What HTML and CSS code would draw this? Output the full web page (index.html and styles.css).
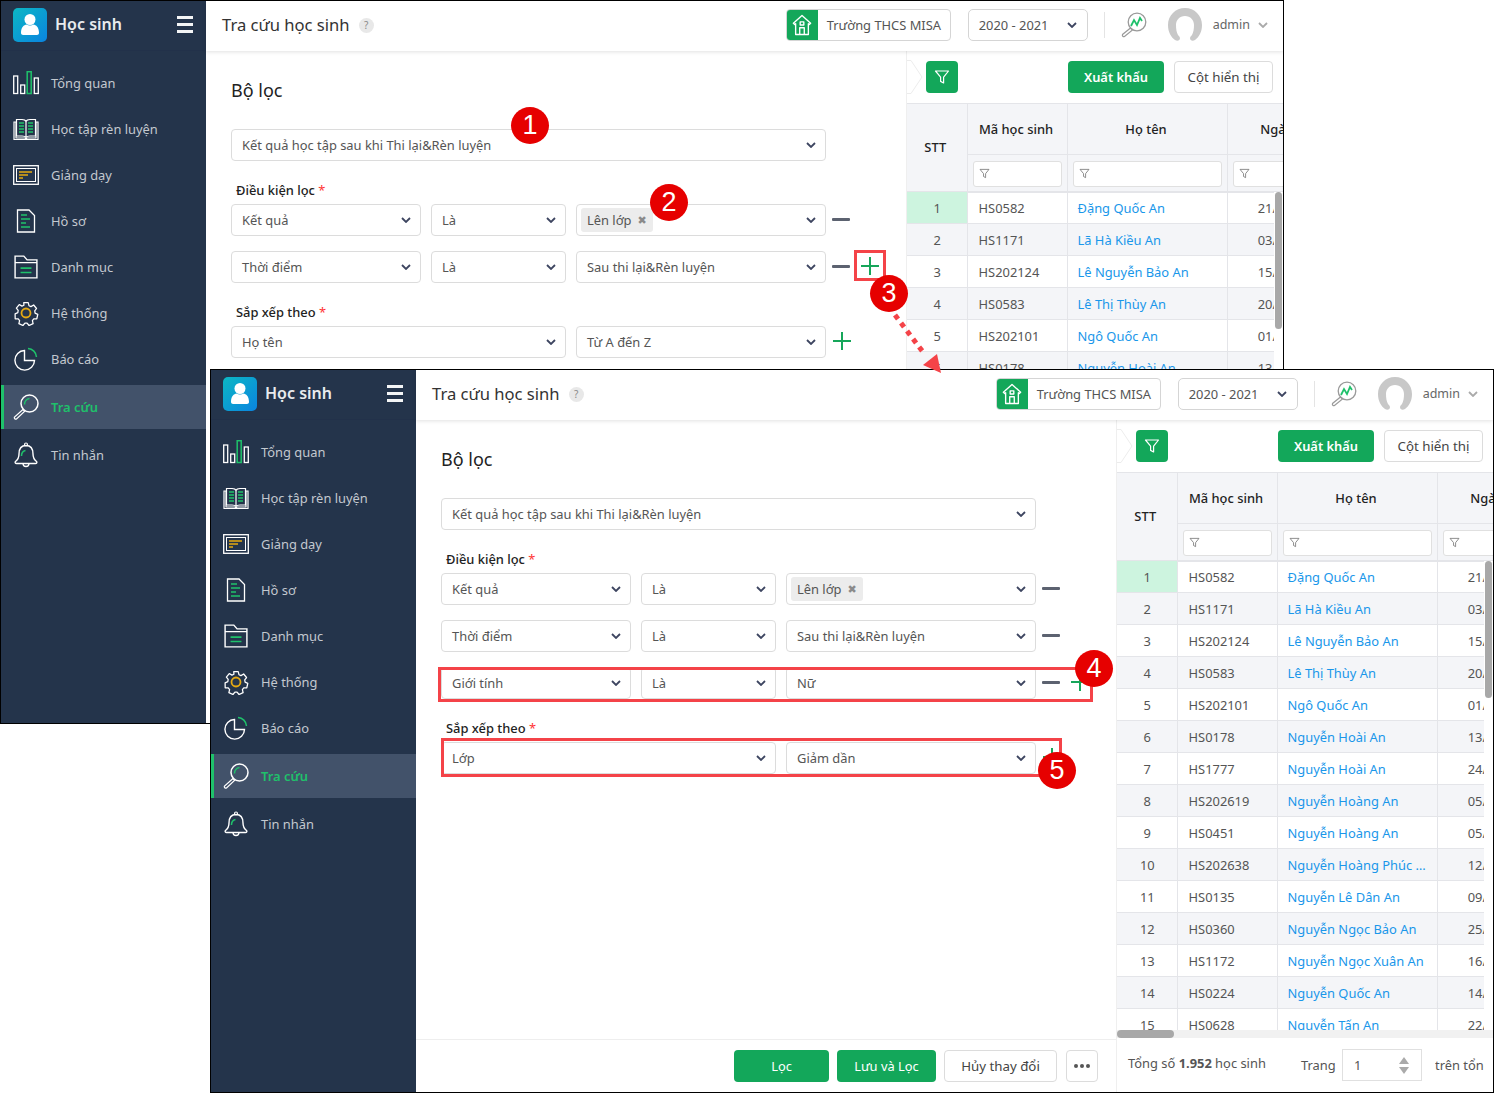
FILE: index.html
```html
<!DOCTYPE html>
<html lang="vi">
<head>
<meta charset="utf-8">
<title>Tra cứu học sinh</title>
<link rel="stylesheet" href="styles.css">
</head>
<body>
<svg class="defs" xmlns="http://www.w3.org/2000/svg">
  <symbol id="i-chev" viewBox="0 0 10 6"><path d="M1 1l4 4 4-4" fill="none" stroke="currentColor" stroke-width="1.8"/></symbol>
  <symbol id="i-funnel" viewBox="0 0 16 16"><path d="M1.500 2h13L9.600 8.200V14l-3-1.600V8.200z" fill="none" stroke="currentColor" stroke-width="1.200" stroke-linejoin="round"/></symbol>
  <symbol id="i-user" viewBox="0 0 34 34"><circle cx="17" cy="11.500" r="5.500" fill="#fff"/><path d="M8 25c0-6 3-8 5.500-8.500 2 1.400 5 1.400 7 0C23 17 26 19 26 25c0 1-1 2-2 2H10c-1 0-2-1-2-2z" fill="#fff"/></symbol>
  <symbol id="i-bars" viewBox="0 0 26 24"><g fill="none" stroke="#fff" stroke-width="1.300"><rect x=".7" y="5" width="4" height="17.500"/><rect x="7.700" y="14" width="4" height="8.500"/><rect x="21.300" y="7" width="4" height="15.500"/></g><rect x="14.200" y=".7" width="4" height="21.800" fill="none" stroke="#1fc16b" stroke-width="1.500"/></symbol>
  <symbol id="i-book" viewBox="0 0 26 24"><g fill="none" stroke="#fff" stroke-width="1.200"><path d="M1 5h2v16h9l1 1 1-1h9V5h2v17.500H1z"/><path d="M3.500 2.500H9c2 0 3.500.7 4 2 .5-1.300 2-2 4-2h5.500V19H17c-2 0-3.500.5-4 1.500-.5-1-2-1.500-4-1.500H3.500zM13 4.500v16"/></g><path d="M6 6h5M6 9h5M6 12h5M6 15h5M15 6h5M15 9h5M15 12h5M15 15h5" stroke="#1fc16b" stroke-width="1.600"/></symbol>
  <symbol id="i-board" viewBox="0 0 26 20"><rect x=".7" y=".7" width="24.600" height="18.600" fill="none" stroke="#fff" stroke-width="1.300"/><rect x="3.500" y="3.500" width="19" height="13" fill="none" stroke="#fff" stroke-width="1"/><path d="M6 7h13M6 10h9M6 13h4" stroke="#e5a912" stroke-width="1.700"/></symbol>
  <symbol id="i-doc" viewBox="0 0 20 24"><path d="M1.500 1H13l5.500 5.500V23h-17z" fill="none" stroke="#fff" stroke-width="1.300"/><path d="M5 6h6M5 10h9M5 14h5M5 18h9" stroke="#1fc16b" stroke-width="1.500"/></symbol>
  <symbol id="i-folder" viewBox="0 0 22 22"><path d="M1 1h8l3 3.500h9V21H1zM1 7h20" fill="none" stroke="#fff" stroke-width="1.300"/><path d="M6 12h10M6 16h10" stroke="#1fc16b" stroke-width="1.500"/></symbol>
  <symbol id="i-gear" viewBox="0 0 26 26"><path d="M10.500 1.500h5l.8 3.400 2.200 1 3-1.800 3.200 3.900-2 2.700.4 2.400 3 1.400-1.100 4.900-3.400.1-1.500 1.900.8 3.400-4.500 2.100-2.200-2.700h-2.400l-2.200 2.700-4.500-2.100.8-3.400-1.500-1.900-3.400-.1L.9 14l3-1.400.4-2.400-2-2.700L5.500 3.600l3 1.800 2.200-1z" transform="translate(1.300 1.300) scale(.9)" fill="none" stroke="#fff" stroke-width="1.400" stroke-linejoin="round"/><circle cx="13" cy="13" r="4.500" fill="none" stroke="#e5a912" stroke-width="1.800"/></symbol>
  <symbol id="i-pie" viewBox="0 0 24 24"><path d="M10.500 3.500a9.800 9.800 0 1 0 10 10h-10z" fill="none" stroke="#fff" stroke-width="1.400"/><path d="M14 1.500a9 9 0 0 1 8.500 8.500" fill="none" stroke="#1fc16b" stroke-width="1.500"/></symbol>
  <symbol id="i-search" viewBox="0 0 26 26"><circle cx="16.500" cy="9.500" r="8.500" fill="none" stroke="#fff" stroke-width="1.500"/><path d="M11.500 10.500a6 6 0 0 1 5-6" fill="none" stroke="#1fc16b" stroke-width="1.500"/><path d="M10 15.500L1.500 23a1.500 1.500 0 0 0 2 2L11.500 17.500z" fill="none" stroke="#fff" stroke-width="1.200"/></symbol>
  <symbol id="i-bell" viewBox="0 0 24 26"><path d="M12 3.500c-5 0-7 3.500-7 8.500 0 4-1.500 6-3.500 7.500-1 1 0 2 1 2h19c1 0 2-1 1-2-2-1.500-3.500-3.500-3.500-7.500 0-5-2-8.500-7-8.500z" fill="none" stroke="#fff" stroke-width="1.400"/><circle cx="12" cy="2.500" r="1.500" fill="none" stroke="#fff" stroke-width="1.100"/><path d="M9 21.500a3 3 0 0 0 6 0" fill="none" stroke="#fff" stroke-width="1.300"/><path d="M7.500 14c0-3 1.500-5 4-5.500" fill="none" stroke="#1fc16b" stroke-width="1.500"/></symbol>
  <symbol id="i-home" viewBox="0 0 22 24"><path d="M11 1.500L1.500 10l1.500 1.500 1-.9V22.500h14V10.600l1 .9L20.500 10zM8.500 22.500V15h5v7.500M9 8.500h4v3.500H9z" fill="none" stroke="#fff" stroke-width="1.500" stroke-linejoin="round"/></symbol>
  <symbol id="i-trend" viewBox="0 0 28 26"><circle cx="17" cy="10" r="8.800" fill="none" stroke="#9a9a9a" stroke-width="1.300"/><path d="M11 14l3-6 3 5 3-7 2 3" fill="none" stroke="#1fc16b" stroke-width="1.800"/><path d="M10.500 16L2.500 22.500a1.500 1.500 0 0 0 2 2L12.500 18z" fill="none" stroke="#9a9a9a" stroke-width="1.200"/></symbol>
  <symbol id="i-avatar" viewBox="0 0 34 34"><path d="M17 0c9.500 0 17 7.500 17 17 0 7-3 12-7 15-2.500 1.500-5 .5-5-2 .5-1.500 1-2 2-3 1.500-3 2-6 2-10 0-5-3.500-9-9-9s-9 4-9 9c0 4 .5 7 2 10 1 1 1.500 1.500 2 3 0 2.500-2.500 3.500-5 2-4-3-7-8-7-15C0 7.500 7.500 0 17 0z" fill="#c8c8c8"/></symbol>
  <symbol id="i-tab" viewBox="0 0 16 34"><path d="M0 .5h4L15 17 4 33.500H0" fill="#fff" stroke="#ececec" stroke-width="1"/></symbol>
</svg>

<section class="win win-a">
  <aside class="side">
    <div class="brand">
      <span class="brand-logo"><svg class="brand-user"><use href="#i-user"/></svg></span>
      <span class="brand-name">Học sinh</span>
      <span class="burger"><i></i><i></i><i></i></span>
    </div>
    <nav class="nav">
      <a class="nav-item"><svg class="nav-ico nav-ico-tall"><use href="#i-bars"/></svg>Tổng quan</a>
      <a class="nav-item"><svg class="nav-ico nav-ico-tall"><use href="#i-book"/></svg>Học tập rèn luyện</a>
      <a class="nav-item"><svg class="nav-ico"><use href="#i-board"/></svg>Giảng dạy</a>
      <a class="nav-item"><svg class="nav-ico nav-ico-tall"><use href="#i-doc"/></svg>Hồ sơ</a>
      <a class="nav-item"><svg class="nav-ico nav-ico-tall"><use href="#i-folder"/></svg>Danh mục</a>
      <a class="nav-item"><svg class="nav-ico nav-ico-lg"><use href="#i-gear"/></svg>Hệ thống</a>
      <a class="nav-item"><svg class="nav-ico nav-ico-tall"><use href="#i-pie"/></svg>Báo cáo</a>
      <a class="nav-item nav-active"><svg class="nav-ico nav-ico-lg"><use href="#i-search"/></svg>Tra cứu</a>
      <a class="nav-item"><svg class="nav-ico nav-ico-lg"><use href="#i-bell"/></svg>Tin nhắn</a>
    </nav>
  </aside>
  <div class="main">
    <header class="top">
      <h1 class="page-title">Tra cứu học sinh</h1><span class="help">?</span>
      <span class="spacer"></span>
      <div class="school"><span class="school-ico"><svg class="home"><use href="#i-home"/></svg></span><span class="school-name">Trường THCS MISA</span></div>
      <div class="year">2020 - 2021<svg class="chev"><use href="#i-chev"/></svg></div>
      <span class="sep"></span>
      <svg class="trend"><use href="#i-trend"/></svg>
      <svg class="avatar"><use href="#i-avatar"/></svg>
      <span class="admin">admin</span><svg class="chev chev-admin"><use href="#i-chev"/></svg>
    </header>
    <div class="content">
      <div class="filter">
        <div class="filter-body">
          <h2 class="filter-title">Bộ lọc</h2>
          <div class="row"><div class="sel w-full">Kết quả học tập sau khi Thi lại&amp;Rèn luyện<svg class="chev"><use href="#i-chev"/></svg></div></div>
          <div class="label">Điều kiện lọc <b>*</b></div>
          <div class="row row-gap">
            <div class="sel w-a">Kết quả<svg class="chev"><use href="#i-chev"/></svg></div>
            <div class="sel w-b">Là<svg class="chev"><use href="#i-chev"/></svg></div>
            <div class="sel w-c sel-chip"><span class="chip">Lên lớp<i class="chip-x">✖</i></span><svg class="chev"><use href="#i-chev"/></svg></div>
            <span class="minus"></span>
          </div>
          <div class="row row-gap">
            <div class="sel w-a">Thời điểm<svg class="chev"><use href="#i-chev"/></svg></div>
            <div class="sel w-b">Là<svg class="chev"><use href="#i-chev"/></svg></div>
            <div class="sel w-c">Sau thi lại&amp;Rèn luyện<svg class="chev"><use href="#i-chev"/></svg></div>
            <span class="minus"></span><span class="plus"></span>
          </div>
          <div class="label">Sắp xếp theo <b>*</b></div>
          <div class="row">
            <div class="sel w-ab">Họ tên<svg class="chev"><use href="#i-chev"/></svg></div>
            <div class="sel w-c">Từ A đến Z<svg class="chev"><use href="#i-chev"/></svg></div>
            <span class="plus plus-first"></span>
          </div>
        </div>
      </div>
      <div class="data">
        <div class="toolbar">
          <svg class="tab"><use href="#i-tab"/></svg>
          <button class="btn btn-icon"><svg class="funnel-w"><use href="#i-funnel"/></svg></button>
          <span class="spacer"></span>
          <button class="btn btn-green btn-export">Xuất khẩu</button>
          <button class="btn btn-light btn-cols">Cột hiển thị</button>
        </div>
        <div class="tbl-wrap">
          <table class="tbl">
            <colgroup><col class="c1"><col class="c2"><col class="c3"><col class="c4"></colgroup>
            <thead>
              <tr class="h1"><th rowspan="2" class="th-stt">STT</th><th>Mã học sinh</th><th>Họ tên</th><th>Ngày sinh</th></tr>
              <tr class="h2"><th><span class="fi"><svg class="funnel"><use href="#i-funnel"/></svg></span></th><th><span class="fi"><svg class="funnel"><use href="#i-funnel"/></svg></span></th><th><span class="fi"><svg class="funnel"><use href="#i-funnel"/></svg></span></th></tr>
            </thead>
            <tbody>
              <tr><td class="num cur">1</td><td class="code">HS0582</td><td class="lnk">Đặng Quốc An</td><td class="date">21/05/2006</td></tr>
              <tr><td class="num">2</td><td class="code">HS1171</td><td class="lnk">Lã Hà Kiều An</td><td class="date">03/02/2006</td></tr>
              <tr><td class="num">3</td><td class="code">HS202124</td><td class="lnk">Lê Nguyễn Bảo An</td><td class="date">15/09/2006</td></tr>
              <tr><td class="num">4</td><td class="code">HS0583</td><td class="lnk">Lê Thị Thùy An</td><td class="date">20/11/2006</td></tr>
              <tr><td class="num">5</td><td class="code">HS202101</td><td class="lnk">Ngô Quốc An</td><td class="date">01/03/2006</td></tr>
              <tr><td class="num">6</td><td class="code">HS0178</td><td class="lnk">Nguyễn Hoài An</td><td class="date">13/07/2006</td></tr>
            </tbody>
          </table>
          <div class="vtrack"><span class="vthumb"></span></div>
        </div>
      </div>
    </div>
  </div>
</section>

<section class="win win-b">
  <aside class="side">
    <div class="brand">
      <span class="brand-logo"><svg class="brand-user"><use href="#i-user"/></svg></span>
      <span class="brand-name">Học sinh</span>
      <span class="burger"><i></i><i></i><i></i></span>
    </div>
    <nav class="nav">
      <a class="nav-item"><svg class="nav-ico nav-ico-tall"><use href="#i-bars"/></svg>Tổng quan</a>
      <a class="nav-item"><svg class="nav-ico nav-ico-tall"><use href="#i-book"/></svg>Học tập rèn luyện</a>
      <a class="nav-item"><svg class="nav-ico"><use href="#i-board"/></svg>Giảng dạy</a>
      <a class="nav-item"><svg class="nav-ico nav-ico-tall"><use href="#i-doc"/></svg>Hồ sơ</a>
      <a class="nav-item"><svg class="nav-ico nav-ico-tall"><use href="#i-folder"/></svg>Danh mục</a>
      <a class="nav-item"><svg class="nav-ico nav-ico-lg"><use href="#i-gear"/></svg>Hệ thống</a>
      <a class="nav-item"><svg class="nav-ico nav-ico-tall"><use href="#i-pie"/></svg>Báo cáo</a>
      <a class="nav-item nav-active"><svg class="nav-ico nav-ico-lg"><use href="#i-search"/></svg>Tra cứu</a>
      <a class="nav-item"><svg class="nav-ico nav-ico-lg"><use href="#i-bell"/></svg>Tin nhắn</a>
    </nav>
  </aside>
  <div class="main">
    <header class="top">
      <h1 class="page-title">Tra cứu học sinh</h1><span class="help">?</span>
      <span class="spacer"></span>
      <div class="school"><span class="school-ico"><svg class="home"><use href="#i-home"/></svg></span><span class="school-name">Trường THCS MISA</span></div>
      <div class="year">2020 - 2021<svg class="chev"><use href="#i-chev"/></svg></div>
      <span class="sep"></span>
      <svg class="trend"><use href="#i-trend"/></svg>
      <svg class="avatar"><use href="#i-avatar"/></svg>
      <span class="admin">admin</span><svg class="chev chev-admin"><use href="#i-chev"/></svg>
    </header>
    <div class="content">
      <div class="filter">
        <div class="filter-body">
          <h2 class="filter-title">Bộ lọc</h2>
          <div class="row"><div class="sel w-full">Kết quả học tập sau khi Thi lại&amp;Rèn luyện<svg class="chev"><use href="#i-chev"/></svg></div></div>
          <div class="label">Điều kiện lọc <b>*</b></div>
          <div class="row row-gap">
            <div class="sel w-a">Kết quả<svg class="chev"><use href="#i-chev"/></svg></div>
            <div class="sel w-b">Là<svg class="chev"><use href="#i-chev"/></svg></div>
            <div class="sel w-c sel-chip"><span class="chip">Lên lớp<i class="chip-x">✖</i></span><svg class="chev"><use href="#i-chev"/></svg></div>
            <span class="minus"></span>
          </div>
          <div class="row row-gap">
            <div class="sel w-a">Thời điểm<svg class="chev"><use href="#i-chev"/></svg></div>
            <div class="sel w-b">Là<svg class="chev"><use href="#i-chev"/></svg></div>
            <div class="sel w-c">Sau thi lại&amp;Rèn luyện<svg class="chev"><use href="#i-chev"/></svg></div>
            <span class="minus"></span>
          </div>
          <div class="row row-gap">
            <div class="sel w-a">Giới tính<svg class="chev"><use href="#i-chev"/></svg></div>
            <div class="sel w-b">Là<svg class="chev"><use href="#i-chev"/></svg></div>
            <div class="sel w-c">Nữ<svg class="chev"><use href="#i-chev"/></svg></div>
            <span class="minus"></span><span class="plus"></span>
          </div>
          <div class="label">Sắp xếp theo <b>*</b></div>
          <div class="row">
            <div class="sel w-ab">Lớp<svg class="chev"><use href="#i-chev"/></svg></div>
            <div class="sel w-c">Giảm dần<svg class="chev"><use href="#i-chev"/></svg></div>
            <span class="plus plus-first"></span>
          </div>
        </div>
        <footer class="filter-foot">
          <button class="btn btn-green btn-loc">Lọc</button>
          <button class="btn btn-green btn-save">Lưu và Lọc</button>
          <button class="btn btn-light btn-undo">Hủy thay đổi</button>
          <button class="btn btn-light btn-more"><i></i><i></i><i></i></button>
        </footer>
      </div>
      <div class="data">
        <div class="toolbar">
          <svg class="tab"><use href="#i-tab"/></svg>
          <button class="btn btn-icon"><svg class="funnel-w"><use href="#i-funnel"/></svg></button>
          <span class="spacer"></span>
          <button class="btn btn-green btn-export">Xuất khẩu</button>
          <button class="btn btn-light btn-cols">Cột hiển thị</button>
        </div>
        <div class="tbl-wrap">
          <table class="tbl">
            <colgroup><col class="c1"><col class="c2"><col class="c3"><col class="c4"></colgroup>
            <thead>
              <tr class="h1"><th rowspan="2" class="th-stt">STT</th><th>Mã học sinh</th><th>Họ tên</th><th>Ngày sinh</th></tr>
              <tr class="h2"><th><span class="fi"><svg class="funnel"><use href="#i-funnel"/></svg></span></th><th><span class="fi"><svg class="funnel"><use href="#i-funnel"/></svg></span></th><th><span class="fi"><svg class="funnel"><use href="#i-funnel"/></svg></span></th></tr>
            </thead>
            <tbody>
              <tr><td class="num cur">1</td><td class="code">HS0582</td><td class="lnk">Đặng Quốc An</td><td class="date">21/05/2006</td></tr>
              <tr><td class="num">2</td><td class="code">HS1171</td><td class="lnk">Lã Hà Kiều An</td><td class="date">03/02/2006</td></tr>
              <tr><td class="num">3</td><td class="code">HS202124</td><td class="lnk">Lê Nguyễn Bảo An</td><td class="date">15/09/2006</td></tr>
              <tr><td class="num">4</td><td class="code">HS0583</td><td class="lnk">Lê Thị Thùy An</td><td class="date">20/11/2006</td></tr>
              <tr><td class="num">5</td><td class="code">HS202101</td><td class="lnk">Ngô Quốc An</td><td class="date">01/03/2006</td></tr>
              <tr><td class="num">6</td><td class="code">HS0178</td><td class="lnk">Nguyễn Hoài An</td><td class="date">13/07/2006</td></tr>
              <tr><td class="num">7</td><td class="code">HS1777</td><td class="lnk">Nguyễn Hoài An</td><td class="date">24/04/2006</td></tr>
              <tr><td class="num">8</td><td class="code">HS202619</td><td class="lnk">Nguyễn Hoàng An</td><td class="date">05/06/2006</td></tr>
              <tr><td class="num">9</td><td class="code">HS0451</td><td class="lnk">Nguyễn Hoàng An</td><td class="date">05/10/2006</td></tr>
              <tr><td class="num">10</td><td class="code">HS202638</td><td class="lnk lnk-cut">Nguyễn Hoàng Phúc An</td><td class="date">12/01/2006</td></tr>
              <tr><td class="num">11</td><td class="code">HS0135</td><td class="lnk">Nguyễn Lê Dân An</td><td class="date">09/08/2006</td></tr>
              <tr><td class="num">12</td><td class="code">HS0360</td><td class="lnk">Nguyễn Ngọc Bảo An</td><td class="date">25/12/2006</td></tr>
              <tr><td class="num">13</td><td class="code">HS1172</td><td class="lnk">Nguyễn Ngọc Xuân An</td><td class="date">16/03/2006</td></tr>
              <tr><td class="num">14</td><td class="code">HS0224</td><td class="lnk">Nguyễn Quốc An</td><td class="date">14/07/2006</td></tr>
              <tr><td class="num">15</td><td class="code">HS0628</td><td class="lnk">Nguyễn Tấn An</td><td class="date">22/02/2006</td></tr>
            </tbody>
          </table>
          <div class="vtrack"><span class="vthumb"></span></div>
        </div>
        <div class="hscroll"><span class="hthumb"></span></div>
        <footer class="pager">
          <span class="total">Tổng số <b>1.952</b> học sinh</span>
          <span class="page-lbl">Trang</span>
          <span class="page-input">1<span class="spin"><i class="up"></i><i class="down"></i></span></span>
          <span class="page-of">trên tổng số 98 trang</span>
        </footer>
      </div>
    </div>
  </div>
</section>

<span class="mark mark-plus"></span>
<span class="mark mark-4"></span>
<span class="mark mark-5"></span>
<svg class="arrow" xmlns="http://www.w3.org/2000/svg" viewBox="0 0 60 70"><path d="M5 4L33 41" stroke="#f44348" stroke-width="5" stroke-dasharray="5 5" fill="none"/><path d="M33 54L47 43 51 62z" fill="#f44348"/></svg>
<span class="badge b1">1</span>
<span class="badge b2">2</span>
<span class="badge b3">3</span>
<span class="badge b4">4</span>
<span class="badge b5">5</span>
</body>
</html>
```

FILE: styles.css
```css
* { box-sizing: border-box; }
html, body { margin: 0; padding: 0; background: #fff; }
body {
  position: relative;
  width: 1494px;
  height: 1093px;
  overflow: hidden;
  font-family: "Noto Sans", "Open Sans", sans-serif;
  font-size: 12.900px;
  color: #555;
}
.defs { display: none; }

/* the two overlapping app windows */
.win {
  position: absolute;
  width: 1284px;
  height: 724px;
  display: flex;
  border: 1px solid #000;
  background: #fff;
  overflow: hidden;
}
.win-a { left: 0; top: 0; }
.win-b { left: 210px; top: 369px; }

/* sidebar */
.side { width: 205px; flex: none; background: #24344b; color: #c3c8cf; }
.brand {
  height: 50px;
  display: flex;
  align-items: center;
  padding: 0 12px 2px;
  border-bottom: 1px solid #22314a;
}
.brand-logo {
  width: 34px;
  height: 34px;
  border-radius: 5px;
  background: linear-gradient(135deg, #0cb8c4, #0a84e0);
  flex: none;
}
.brand-user { display: block; width: 34px; height: 34px; }
.brand-name { margin: 0 0 2px 8px; font-size: 16px; font-weight: 600; color: #e8ebee; flex: 1; }
.burger { width: 16px; display: flex; flex-direction: column; gap: 4px; margin-right: 1px; }
.burger i { display: block; height: 3px; background: #f4f5f6; }
.nav { padding-top: 9px; }
.nav-item {
  height: 46px;
  display: flex;
  align-items: center;
  padding-left: 12px;
  gap: 12px;
}
.nav-ico { width: 26px; height: 20px; flex: none; }
.nav-ico-tall { height: 24px; }
.nav-ico-lg { height: 26px; }
.nav-active {
  height: 44px;
  margin: 3px 0;
  background: #42526a;
  box-shadow: inset 3px 0 0 #1fc16b;
  color: #1fc16b;
  font-weight: 600;
}

/* main column */
.main { flex: 1; min-width: 0; display: flex; flex-direction: column; }
.top {
  height: 50px;
  flex: none;
  display: flex;
  align-items: center;
  padding: 0 15px 2px 16px;
  background: #fff;
  box-shadow: 0 1px 4px rgba(0, 0, 0, .12);
  position: relative;
}
.page-title { margin: 0 0 2px; font-size: 16.600px; font-weight: 400; color: #333; }
.help {
  width: 15px;
  height: 15px;
  margin-left: 9px;
  border-radius: 50%;
  background: #e8e8e8;
  color: #888;
  font-size: 10px;
  line-height: 15px;
  text-align: center;
}
.spacer { flex: 1; }
.school {
  width: 165px;
  height: 32px;
  display: flex;
  align-items: center;
  border: 1px solid #d5d5d5;
  border-radius: 4px;
  overflow: hidden;
}
.school-ico {
  width: 31px;
  height: 32px;
  background: #13a75a;
  display: flex;
  align-items: center;
  justify-content: center;
  flex: none;
}
.home { width: 20px; height: 22px; }
.school-name { margin-left: 9px; color: #555; white-space: nowrap; }
.year {
  width: 120px;
  height: 32px;
  margin-left: 17px;
  padding: 0 10px;
  display: flex;
  align-items: center;
  justify-content: space-between;
  border: 1px solid #d5d5d5;
  border-radius: 5px;
}
.chev { width: 10px; height: 6px; color: #3d4560; flex: none; }
.sep { width: 1px; height: 26px; background: #e4e4e4; margin-left: 16px; }
.trend { width: 28px; height: 26px; margin-left: 15px; }
.avatar { width: 34px; height: 34px; margin-left: 20px; }
.admin { margin: 0 0 2px 11px; color: #666; font-size: 12.500px; }
.chev-admin { margin-left: 8px; color: #aaa; }

.content { flex: 1; min-height: 0; display: flex; }

/* filter pane */
.filter {
  width: 701px;
  flex: none;
  display: flex;
  flex-direction: column;
  border-right: 1px solid #efefef;
}
.filter-body { flex: 1; padding: 27px 0 0 25px; }
.filter-title { margin: 0 0 27px; font-size: 18px; line-height: 24px; font-weight: 400; color: #222; }
.row { display: flex; align-items: center; gap: 10px; }
.row-gap { margin-bottom: 15px; }
.label { margin: 20px 0 5px 5px; line-height: 18px; color: #222; font-weight: 500; }
.label b { color: #f33; font-weight: 400; }
.sel {
  height: 32px;
  padding: 0 9px 0 10px;
  display: flex;
  align-items: center;
  justify-content: space-between;
  border: 1px solid #dcdcdc;
  border-radius: 4px;
  background: #fff;
  flex: none;
}
.w-full { width: 595px; }
.w-a { width: 190px; }
.w-b { width: 135px; }
.w-c { width: 250px; }
.w-ab { width: 335px; }
.sel-chip { padding-left: 4px; }
.chip {
  height: 24px;
  padding: 0 6px;
  display: flex;
  align-items: center;
  gap: 6px;
  border-radius: 3px;
  background: #ececec;
}
.chip-x { font: normal 11px "DejaVu Sans", sans-serif; color: #8a8a8a; }
.minus { width: 18px; height: 3px; margin: -2px 0 0 -4px; background: #5c6270; border-radius: 1px; flex: none; }
.plus { position: relative; width: 18px; height: 18px; margin: -2px 0 0 1px; flex: none; }
.plus::before, .plus::after { content: ""; position: absolute; background: #16a65a; }
.plus::before { left: 0; right: 0; top: 8px; height: 2px; }
.plus::after { top: 0; bottom: 0; left: 8px; width: 2px; }
.plus-first { margin-left: -3px; }
.filter-foot {
  height: 53px;
  flex: none;
  display: flex;
  align-items: center;
  justify-content: flex-end;
  gap: 8px;
  padding: 0 18px 0 0;
  border-top: 1px solid #eee;
}

/* buttons */
.btn {
  height: 32px;
  padding: 0;
  border-radius: 4px;
  font: inherit;
  flex: none;
}
.btn-green { background: #13a75a; border: 0; color: #fff; }
.btn-light { background: #fff; border: 1px solid #dcdcdc; color: #444; font-size: 13.300px; }
.btn-icon { width: 32px; background: #13a75a; border: 0; display: flex; align-items: center; justify-content: center; margin-left: 3px; }
.funnel-w { width: 16px; height: 16px; color: #fff; }
.btn-export { width: 96px; font-weight: 600; }
.btn-cols { width: 99px; margin-left: 10px; }
.btn-loc { width: 95px; }
.btn-save { width: 99px; }
.btn-undo { width: 113px; margin-right: 1px; }
.btn-more { width: 32px; display: flex; align-items: center; justify-content: center; gap: 2px; }
.btn-more i { width: 4px; height: 4px; border-radius: 50%; background: #555; }

/* data pane */
.data { flex: 1; min-width: 0; display: flex; flex-direction: column; }
.toolbar {
  height: 52px;
  flex: none;
  display: flex;
  align-items: center;
  padding: 0 10px 1px 0;
}
.tab { width: 16px; height: 34px; flex: none; }
.tbl-wrap { flex: 1; min-height: 0; position: relative; overflow: hidden; }
.tbl { border-collapse: collapse; table-layout: fixed; width: 450px; }
.c1 { width: 60px; }
.c2 { width: 100px; }
.c3 { width: 160px; }
.c4 { width: 130px; }
.tbl th {
  background: #f4f5f8;
  border: 1px solid #e4e5e9;
  color: #222;
  font-weight: 500;
  padding: 0 2px 0 0;
}
.tbl th:first-child { border-left: 0; }
.tbl th.th-stt { padding: 0 3px 2px 0; }
.h1 th { height: 51px; }
.tbl .h2 th { height: 37px; padding: 2px 5px 0 5px; border-bottom: 2px solid #e4e5e9; }
.fi {
  height: 26px;
  display: flex;
  align-items: center;
  padding-left: 5px;
  background: #fff;
  border: 1px solid #e0e0e0;
  border-radius: 3px;
}
.funnel { width: 11px; height: 11px; color: #777; }
.tbl td {
  height: 32px;
  padding: 0 9px 0 10px;
  border-bottom: 1px solid #e4e5e9;
  border-right: 1px solid #e4e5e9;
  white-space: nowrap;
  overflow: hidden;
}
.tbl tbody tr:nth-child(even) td { background: #f4f5f8; }
.tbl td.num { text-align: center; }
.tbl td.cur { background: #cdf4df; }
.tbl td.code { padding-left: 11px; }
.tbl td.lnk { color: #1a97ea; }
.tbl td.lnk-cut { text-overflow: ellipsis; }
.tbl td.date { text-align: center; padding: 0; }

/* overlay scrollbar on the right of the table body */
.vtrack {
  position: absolute;
  right: 0;
  top: 89px;
  bottom: 0;
  width: 9px;
  background: #fff;
}
.vthumb {
  position: absolute;
  left: 1px;
  top: 0;
  width: 7px;
  height: 137px;
  border-radius: 4px;
  background: #a8a8a8;
}
.hscroll { height: 8px; flex: none; background: #f1f1f1; }
.hthumb { display: block; width: 57px; height: 8px; border-radius: 4px; background: #a8a8a8; }
.pager {
  height: 54px;
  flex: none;
  display: flex;
  align-items: center;
  padding-left: 11px;
  white-space: nowrap;
  overflow: hidden;
}
.total { width: 173px; margin-top: -4px; flex: none; }
.total b { font-weight: 700; }
.page-lbl { width: 41px; flex: none; }
.page-input {
  width: 80px;
  height: 32px;
  flex: none;
  padding: 0 11px;
  display: flex;
  align-items: center;
  justify-content: space-between;
  border: 1px solid #e0e0e0;
}
.spin { display: flex; flex-direction: column; gap: 3px; margin-right: 1px; }
.spin i { width: 0; height: 0; border-left: 5px solid transparent; border-right: 5px solid transparent; }
.spin .up { border-bottom: 7px solid #aaa; }
.spin .down { border-top: 7px solid #aaa; }
.page-of { flex: 1; min-width: 0; margin: 0 9px 0 13px; overflow: hidden; }

/* tutorial annotations drawn over the screenshots */
.mark { position: absolute; border: 3px solid #f44348; }
.mark-plus { left: 854px; top: 250px; width: 32px; height: 31px; }
.mark-4 { left: 438px; top: 667px; width: 655px; height: 35px; }
.mark-5 { left: 441px; top: 738px; width: 621px; height: 39px; }
.arrow { position: absolute; left: 890px; top: 311px; width: 60px; height: 70px; }
.badge {
  position: absolute;
  width: 38px;
  height: 37px;
  border-radius: 50%;
  background: #e60000;
  color: #fff;
  font: 27px/37px "Liberation Sans", sans-serif;
  text-align: center;
}
.b1 { left: 511px; top: 107px; }
.b2 { left: 650px; top: 184px; }
.b3 { left: 870px; top: 275px; }
.b4 { left: 1075px; top: 650px; }
.b5 { left: 1038px; top: 752px; }
```
